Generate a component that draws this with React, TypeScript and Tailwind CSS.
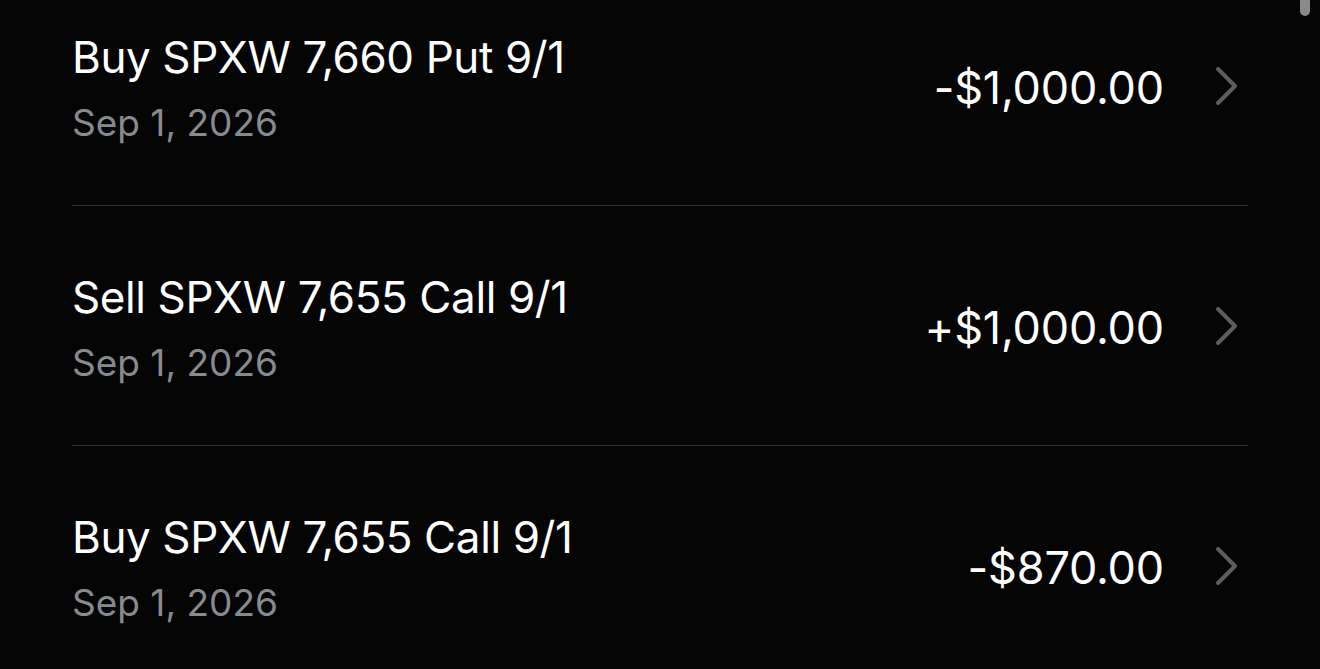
const rows = [
  { title: 'Buy SPXW 7,660 Put 9/1', date: 'Sep 1, 2026', amount: '-$1,000.00' },
  { title: 'Sell SPXW 7,655 Call 9/1', date: 'Sep 1, 2026', amount: '+$1,000.00' },
  { title: 'Buy SPXW 7,655 Call 9/1', date: 'Sep 1, 2026', amount: '-$870.00' },
];

function Chevron() {
  return (
    <svg width="26" height="40" viewBox="0 0 26 40" fill="none" className="ml-[50px] mr-[8px] shrink-0">
      <path d="M4 3 L21 20 L4 37" stroke="#5b5e61" strokeWidth="4" strokeLinecap="round" strokeLinejoin="round" />
    </svg>
  );
}

export default function App() {
  return (
    <div className="relative h-[669px] w-[1320px] overflow-hidden bg-[#050505] font-[Inter,sans-serif]">
      {/* scrollbar thumb */}
      <div className="absolute right-[10px] top-[-10px] h-[26px] w-[10px] rounded-full bg-[#8a8a8a]" />

      <div className="mt-[-34px] px-[72px]">
        {rows.map((row, idx) => (
          <div
            key={idx}
            className={`flex h-[240px] items-center ${idx < rows.length - 1 ? 'border-b border-[#333436]' : ''}`}
          >
            <div className="flex grow flex-col gap-[18px] pt-[4px]">
              <div className="text-[44px] leading-[52px] tracking-[-0.4px] text-white">{row.title}</div>
              <div className="text-[37px] leading-[44px] text-[#858b91]">{row.date}</div>
            </div>
            <div className="pt-[4px] text-[45px] leading-[52px] tracking-[-0.2px] text-white">{row.amount}</div>
            <Chevron />
          </div>
        ))}
      </div>
    </div>
  );
}
